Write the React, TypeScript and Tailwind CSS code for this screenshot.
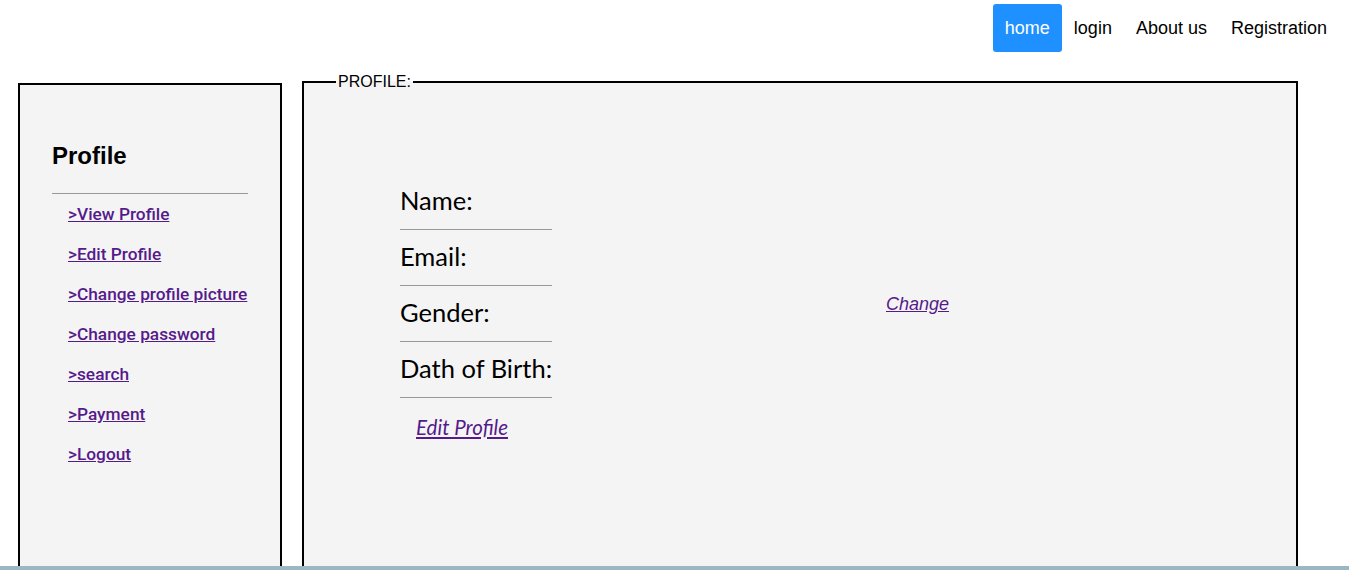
import React from "react";

const sideLinks = [
  ">View Profile",
  ">Edit Profile",
  ">Change profile picture",
  ">Change password",
  ">search",
  ">Payment",
  ">Logout",
];

const fields = ["Name:", "Email:", "Gender:", "Dath of Birth:"];

export default function App() {
  return (
    <div className="min-h-screen bg-white font-['Liberation_Sans',Arial,sans-serif] text-black">
      {/* top nav */}
      <nav className="flex h-[52px] items-start justify-end pr-[10px] pt-1">
        <a className="flex h-12 items-center rounded-[3px] bg-[#1e90ff] px-3 text-[18px] text-white">
          home
        </a>
        <a className="flex h-12 items-center px-3 text-[18px]">login</a>
        <a className="flex h-12 items-center px-3 text-[18px]">About us</a>
        <a className="flex h-12 items-center px-3 text-[18px]">Registration</a>
      </nav>

      <div className="flex items-start gap-5 pl-[18px]">
        {/* sidebar */}
        <aside className="mt-[31px] h-[483px] w-[264px] border-2 border-b-0 border-black bg-[#f4f4f4] pl-8 pt-[57px]">
          <h2 className="text-[24px] font-bold leading-7">Profile</h2>
          <hr className="mt-[23px] w-[196px] border-t border-[#999]" />
          <ul className="mt-[10px] pl-4">
            {sideLinks.map((l) => (
              <li key={l} className="h-10 leading-5">
                <a className="font-['Roboto',sans-serif] text-[17.3px] font-medium text-[#551a8b] underline">
                  {l}
                </a>
              </li>
            ))}
          </ul>
        </aside>

        {/* profile fieldset */}
        <fieldset className="mt-[22px] h-[492px] w-[996px] border-2 border-b-0 border-black bg-[#f4f4f4] pl-8">
          <legend className="px-[2px] text-[16px] leading-4">PROFILE:</legend>
          <div className="flex pt-[84px]">
            <div className="ml-16 flex w-fit flex-col font-['Lato',sans-serif]">
              {fields.map((f) => (
                <div key={f}>
                  <div className="h-[55px] pt-[11px] text-[25.5px] leading-[30px]">{f}</div>
                  <hr className="border-t border-[#999]" />
                </div>
              ))}
              <a className="ml-4 mt-[17px] text-[20.5px] italic leading-6 text-[#551a8b] underline">
                Edit Profile
              </a>
            </div>
            <div className="flex flex-1 items-center justify-center pb-[4px] pr-[13px]">
              <a className="text-[18px] italic text-[#551a8b] underline">Change</a>
            </div>
          </div>
        </fieldset>
      </div>

      <footer className="h-[200px] bg-[#9ab8c4]" />
    </div>
  );
}
